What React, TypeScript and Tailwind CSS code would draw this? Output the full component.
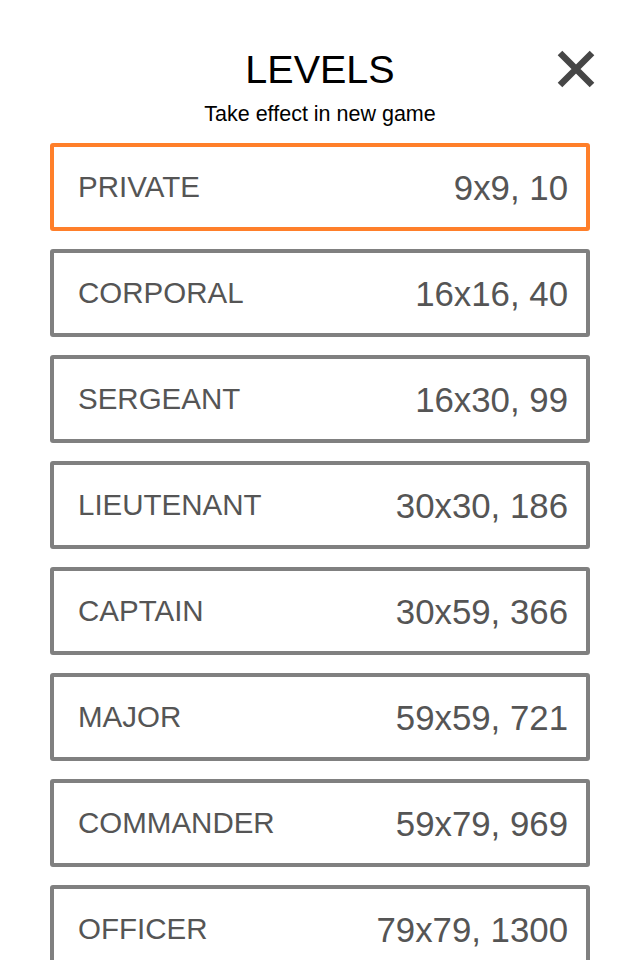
import React from "react"

const levels = [
    { name: "PRIVATE", size: "9x9, 10" },
    { name: "CORPORAL", size: "16x16, 40" },
    { name: "SERGEANT", size: "16x30, 99" },
    { name: "LIEUTENANT", size: "30x30, 186" },
    { name: "CAPTAIN", size: "30x59, 366" },
    { name: "MAJOR", size: "59x59, 721" },
    { name: "COMMANDER", size: "59x79, 969" },
    { name: "OFFICER", size: "79x79, 1300" },
]

export default function App() {
    const selected = 0

    return (
        <div className="w-[640px] h-[960px] overflow-hidden bg-white font-['Liberation_Sans',Arial,sans-serif]">
            <div className="relative pt-[50px]">
                <h1 className="text-center text-[39.5px] leading-none text-black">LEVELS</h1>
                <p className="mt-[14px] text-center text-[21.5px] leading-none text-black">Take effect in new game</p>
                <button className="absolute top-[50px] left-[557px] w-[38px] h-[38px]">
                    <svg viewBox="0 0 38 38" className="w-[38px] h-[38px]">
                        <path d="M3 3 L35 35 M35 3 L3 35" stroke="#464646" strokeWidth="6.5" />
                    </svg>
                </button>
            </div>
            <div className="flex flex-col gap-[18px] px-[50px] mt-[18px]">
                {levels.map((level, index) => (
                    <div
                        key={index}
                        className={`flex items-center justify-between h-[88px] border-4 rounded-[3px] pl-[24px] pr-[18px] ${
                            index === selected ? "border-[#ff7f2a]" : "border-[#808080]"
                        }`}
                    >
                        <span className="text-[29.5px] leading-none text-[#555555]">{level.name}</span>
                        <span className="text-[34.8px] leading-none text-[#555555] pt-[2px]">{level.size}</span>
                    </div>
                ))}
            </div>
        </div>
    )
}
